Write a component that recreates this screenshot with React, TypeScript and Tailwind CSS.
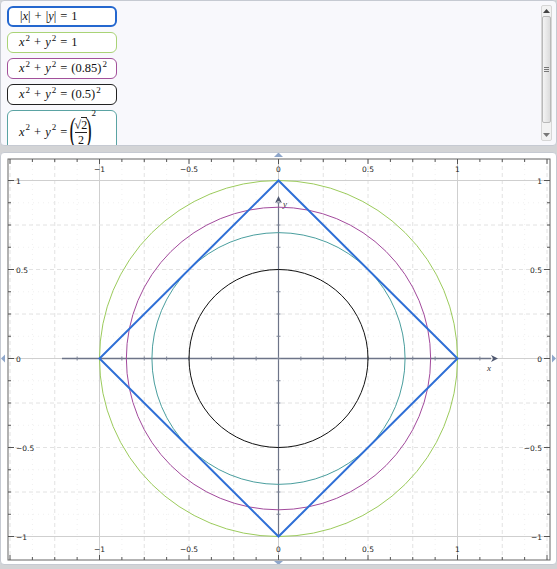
import React from "react";

const X = (u: number) => 278.5 + 179 * u;
const Y = (v: number) => 358.5 - 178 * v;

const FRAME = { l: 8, r: 550, t: 159, b: 560 };

function fmt(n: number): string {
  if (n === 0) return "0";
  const s = Math.abs(n).toString();
  return n < 0 ? "\u2212" + s : s;
}

function Sq() {
  return <sup className="text-[9px] not-italic ml-[1px] relative -top-[5px]">2</sup>;
}

function V({ c }: { c: string }) {
  return <i>{c}</i>;
}

const Op = ({ c }: { c: string }) => <span className="mx-[4px]">{c}</span>;

function Box({ color, thick, children, tall }: { color: string; thick?: boolean; tall?: boolean; children: React.ReactNode }) {
  return (
    <div
      className={`w-[110px] shrink-0 rounded-[6px] bg-white flex items-center ${thick ? "border-2 pl-[11px]" : "border pl-[11px]"} ${tall ? "h-[44px]" : "h-[21px]"}`}
      style={{ borderColor: color }}
    >
      <span className="text-[12.5px] text-[#111] whitespace-nowrap leading-none" style={{ fontFamily: '"Liberation Serif", "DejaVu Serif", serif' }}>
        {children}
      </span>
    </div>
  );
}

function Scrollbar() {
  return (
    <div className="w-[11px] my-[4px] mr-[4px] flex flex-col items-center bg-[#f2f2f2] border border-[#d6d6d6] rounded-[2px]">
      <div className="h-[10px] flex items-center justify-center">
        <svg width="7" height="4" viewBox="0 0 7 4"><path d="M0 4 L3.5 0 L7 4Z" fill="#444" /></svg>
      </div>
      <div className="w-[9px] h-[107px] rounded-[2px] border border-[#b9b9b9] bg-[linear-gradient(90deg,#f4f4f4,#dcdcdc)] flex items-center justify-center">
        <div className="flex flex-col gap-[1px]">
          <div className="w-[5px] h-px bg-[#777]" />
          <div className="w-[5px] h-px bg-[#777]" />
          <div className="w-[5px] h-px bg-[#777]" />
        </div>
      </div>
      <div className="flex-1" />
      <div className="h-[10px] flex items-center justify-center">
        <svg width="7" height="4" viewBox="0 0 7 4"><path d="M0 0 L3.5 4 L7 0Z" fill="#777" /></svg>
      </div>
    </div>
  );
}

function Graph() {
  const xs: number[] = [];
  for (let k = -12; k <= 12; k++) xs.push(k * 0.125);
  const ys: number[] = [];
  for (let k = -8; k <= 8; k++) ys.push(k * 0.125);
  const labelsX = [-1, -0.5, 0, 0.5, 1];
  const labelsY = [-1, -0.5, 0, 0.5, 1];
  const r = 179;
  const ry = 178;
  const cx = X(0);
  const cy = Y(0);
  const tick = "#555";
  const lf = { fontFamily: '"DejaVu Sans", sans-serif', fontSize: 7.5, fill: "#222" } as const;
  const gridStroke = (t: number) => {
    const line = Math.abs(t) === 1 || t === 0;
    const major = Math.abs(t * 4 - Math.round(t * 4)) < 1e-6;
    if (line) return { stroke: "#cfcfcf" };
    if (major) return { stroke: "#e2e2e2", strokeDasharray: "4 3" };
    return { stroke: "#f0f0f0", strokeDasharray: "1 4" };
  };
  return (
    <svg width="557" height="413" viewBox="0 152 557 413" className="block">
      {/* grid */}
      {xs.map((u) => (
        <line key={"gx" + u} x1={X(u)} x2={X(u)} y1={FRAME.t} y2={FRAME.b} strokeWidth={1} {...gridStroke(u)} />
      ))}
      {ys.map((v) => (
        <line key={"gy" + v} x1={FRAME.l} x2={FRAME.r} y1={Y(v)} y2={Y(v)} strokeWidth={1} {...gridStroke(v)} />
      ))}

      {/* frame */}
      <rect x={FRAME.l} y={FRAME.t} width={FRAME.r - FRAME.l} height={FRAME.b - FRAME.t} fill="none" stroke="#666" strokeWidth={1} />
      {xs.map((u) => {
        const big = Math.abs(u * 2 - Math.round(u * 2)) < 1e-6;
        const len = big ? 5 : 3;
        return (
          <g key={"tx" + u}>
            <line x1={X(u)} x2={X(u)} y1={FRAME.t} y2={FRAME.t + len} stroke={tick} />
            <line x1={X(u)} x2={X(u)} y1={FRAME.b} y2={FRAME.b - len} stroke={tick} />
          </g>
        );
      })}
      {ys.map((v) => {
        const big = Math.abs(v * 2 - Math.round(v * 2)) < 1e-6;
        const len = big ? 6 : 3;
        return (
          <g key={"ty" + v}>
            <line x1={FRAME.l} x2={FRAME.l + len} y1={Y(v)} y2={Y(v)} stroke={tick} />
            <line x1={FRAME.r} x2={FRAME.r - len} y1={Y(v)} y2={Y(v)} stroke={tick} />
          </g>
        );
      })}
      {labelsX.map((u) => (
        <g key={"lx" + u}>
          <text x={X(u)} y={172} textAnchor="middle" {...lf}>{fmt(u)}</text>
          <text x={X(u)} y={552} textAnchor="middle" {...lf}>{fmt(u)}</text>
        </g>
      ))}
      {labelsY.map((v) => (
        <g key={"ly" + v}>
          <text x={16} y={Y(v) + 3} textAnchor="start" {...lf}>{fmt(v)}</text>
          <text x={542} y={Y(v) + 3} textAnchor="end" {...lf}>{fmt(v)}</text>
        </g>
      ))}

      {/* axes */}
      <line x1={62} x2={491} y1={cy} y2={cy} stroke="#6d7488" strokeWidth={1.6} />
      <path d={`M491 ${cy - 3.5} L498 ${cy} L491 ${cy + 3.5} L493 ${cy}Z`} fill="#4f5870" />
      <line x1={cx} x2={cx} y1={Y(-1)} y2={203} stroke="#6d7488" strokeWidth={1.2} />
      <path d={`M${cx - 3.5} 203 L${cx} 196 L${cx + 3.5} 203 L${cx} 201Z`} fill="#4f5870" />
      {xs.filter((u) => u > -1.25 && u < 1.2).map((u) => (
        <line key={"ax" + u} x1={X(u)} x2={X(u)} y1={cy - 2} y2={cy + 2} stroke="#7d8496" />
      ))}
      {ys.filter((v) => v < 0.9).map((v) => (
        <line key={"ay" + v} x1={cx - 2} x2={cx + 2} y1={Y(v)} y2={Y(v)} stroke="#7d8496" />
      ))}
      <text x={487} y={371} fontFamily='"Liberation Serif", serif' fontStyle="italic" fontSize={9} fill="#333">x</text>
      <text x={283} y={207} fontFamily='"Liberation Serif", serif' fontStyle="italic" fontSize={9} fill="#333">y</text>

      {/* curves */}
      <ellipse cx={cx} cy={cy} rx={r} ry={ry} fill="none" stroke="#9ccb5c" strokeWidth={1} />
      <ellipse cx={cx} cy={cy} rx={r * 0.85} ry={ry * 0.85} fill="none" stroke="#a24a9c" strokeWidth={1} />
      <ellipse cx={cx} cy={cy} rx={r * Math.SQRT1_2} ry={ry * Math.SQRT1_2} fill="none" stroke="#4a9e9e" strokeWidth={1} />
      <ellipse cx={cx} cy={cy} rx={r * 0.5} ry={ry * 0.5} fill="none" stroke="#111" strokeWidth={1} />
      <path
        d={`M${X(1)} ${cy} L${cx} ${Y(1)} L${X(-1)} ${cy} L${cx} ${Y(-1)}Z`}
        fill="none"
        stroke="#2f6fd6"
        strokeWidth={2}
        strokeLinejoin="miter"
      />

      {/* edge markers */}
      <path d="M274 157 L278.5 152.5 L283 157Z" fill="#8ea6ca" />
      <path d="M274 561 L278.5 565 L283 561Z" fill="#8ea6ca" />
      <path d={`M5 ${cy - 4} L1 ${cy} L5 ${cy + 4}Z`} fill="#8ea6ca" />
      <path d={`M552 ${cy - 4} L556 ${cy} L552 ${cy + 4}Z`} fill="#8ea6ca" />
    </svg>
  );
}

export default function App() {
  return (
    <div className="w-[557px] h-[569px] bg-[#d3d4d6] flex flex-col overflow-hidden">
      {/* equation list */}
      <div className="h-[146px] shrink-0 flex bg-[#f8f8fc] border border-[#c6cad2] rounded-[4px] overflow-hidden">
        <div className="flex-1 flex flex-col gap-[5px] pl-[6px] pt-[5px] overflow-hidden">
          <Box color="#2467cf" thick>
            <span>|<V c="x" />|</span>
            <Op c="+" />
            <span>|<V c="y" />|</span>
            <Op c="=" />
            <span>1</span>
          </Box>
          <Box color="#a9d376">
            <V c="x" /><Sq />
            <Op c="+" />
            <V c="y" /><Sq />
            <Op c="=" />
            <span>1</span>
          </Box>
          <Box color="#a2509a">
            <V c="x" /><Sq />
            <Op c="+" />
            <V c="y" /><Sq />
            <Op c="=" />
            <span>(0.85)</span><Sq />
          </Box>
          <Box color="#222">
            <V c="x" /><Sq />
            <Op c="+" />
            <V c="y" /><Sq />
            <Op c="=" />
            <span>(0.5)</span><Sq />
          </Box>
          <Box color="#5aa3a3" tall>
            <span className="inline-flex items-center">
              <V c="x" /><Sq />
              <Op c="+" />
              <V c="y" /><Sq />
              <Op c="=" />
              <span className="text-[34px] font-light leading-none scale-x-[0.55] -mx-[4px] relative -top-[2px]">(</span>
              <span className="inline-flex flex-col items-center text-[12px] leading-[14px]">
                <span>√<span className="border-t border-[#222]">2</span></span>
                <span className="border-t border-[#222] px-[1px] w-full text-center">2</span>
              </span>
              <span className="text-[34px] font-light leading-none scale-x-[0.55] -mx-[4px] relative -top-[2px]">)</span>
              <sup className="text-[9px] self-start relative -top-[2px] ml-[1px]">2</sup>
            </span>
          </Box>
        </div>
        <Scrollbar />
      </div>

      {/* graph */}
      <div className="mt-[6px] h-[413px] shrink-0 bg-white rounded-[4px] border border-[#c6cad2] overflow-hidden">
        <div className="-ml-px -mt-px">
          <Graph />
        </div>
      </div>
    </div>
  );
}
